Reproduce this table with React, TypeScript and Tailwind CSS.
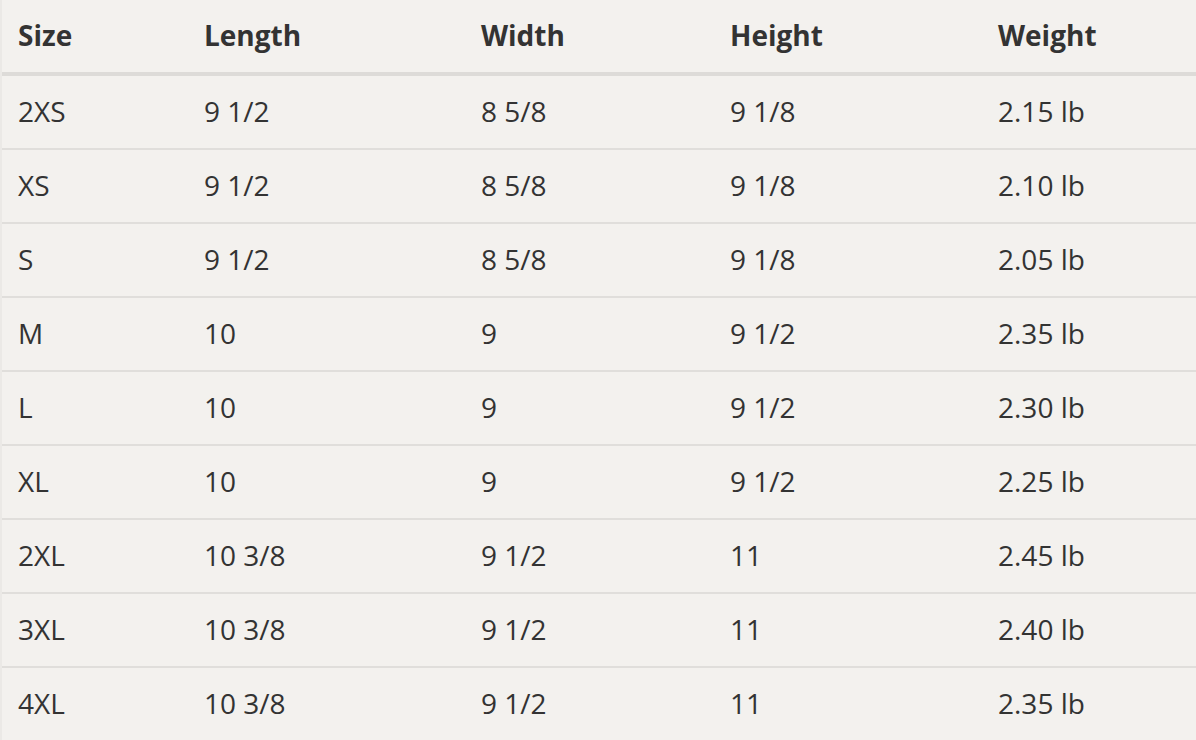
import React from "react";

const rows = [
  ["2XS", "9 1/2", "8 5/8", "9 1/8", "2.15 lb"],
  ["XS", "9 1/2", "8 5/8", "9 1/8", "2.10 lb"],
  ["S", "9 1/2", "8 5/8", "9 1/8", "2.05 lb"],
  ["M", "10", "9", "9 1/2", "2.35 lb"],
  ["L", "10", "9", "9 1/2", "2.30 lb"],
  ["XL", "10", "9", "9 1/2", "2.25 lb"],
  ["2XL", "10 3/8", "9 1/2", "11", "2.45 lb"],
  ["3XL", "10 3/8", "9 1/2", "11", "2.40 lb"],
  ["4XL", "10 3/8", "9 1/2", "11", "2.35 lb"],
];

const grid = "grid grid-cols-[186px_277px_249px_268px_1fr]";

export default function App() {
  return (
    <div
      className="w-[1196px] h-[740px] overflow-hidden bg-[#f3f1ee] text-[#333333] text-[28px] leading-none"
      style={{ fontFamily: '"Open Sans", "Noto Sans", sans-serif' }}
    >
      <div className="border-l-2 border-[#ebe9e6] h-full">
        <div className={`${grid} h-[72px] items-center font-bold border-b-4 border-[#dddbd8] box-content`}>
          {["Size", "Length", "Width", "Height", "Weight"].map((h) => (
            <div key={h} className="pl-[16px] pb-[2px]">{h}</div>
          ))}
        </div>
        {rows.map((r, i) => (
          <div
            key={i}
            className={`${grid} h-[72px] items-center border-b-2 border-[#e0dedb] box-content`}
          >
            {r.map((c, j) => (
              <div key={j} className="pl-[16px] pb-[2px]">{c}</div>
            ))}
          </div>
        ))}
      </div>
    </div>
  );
}
